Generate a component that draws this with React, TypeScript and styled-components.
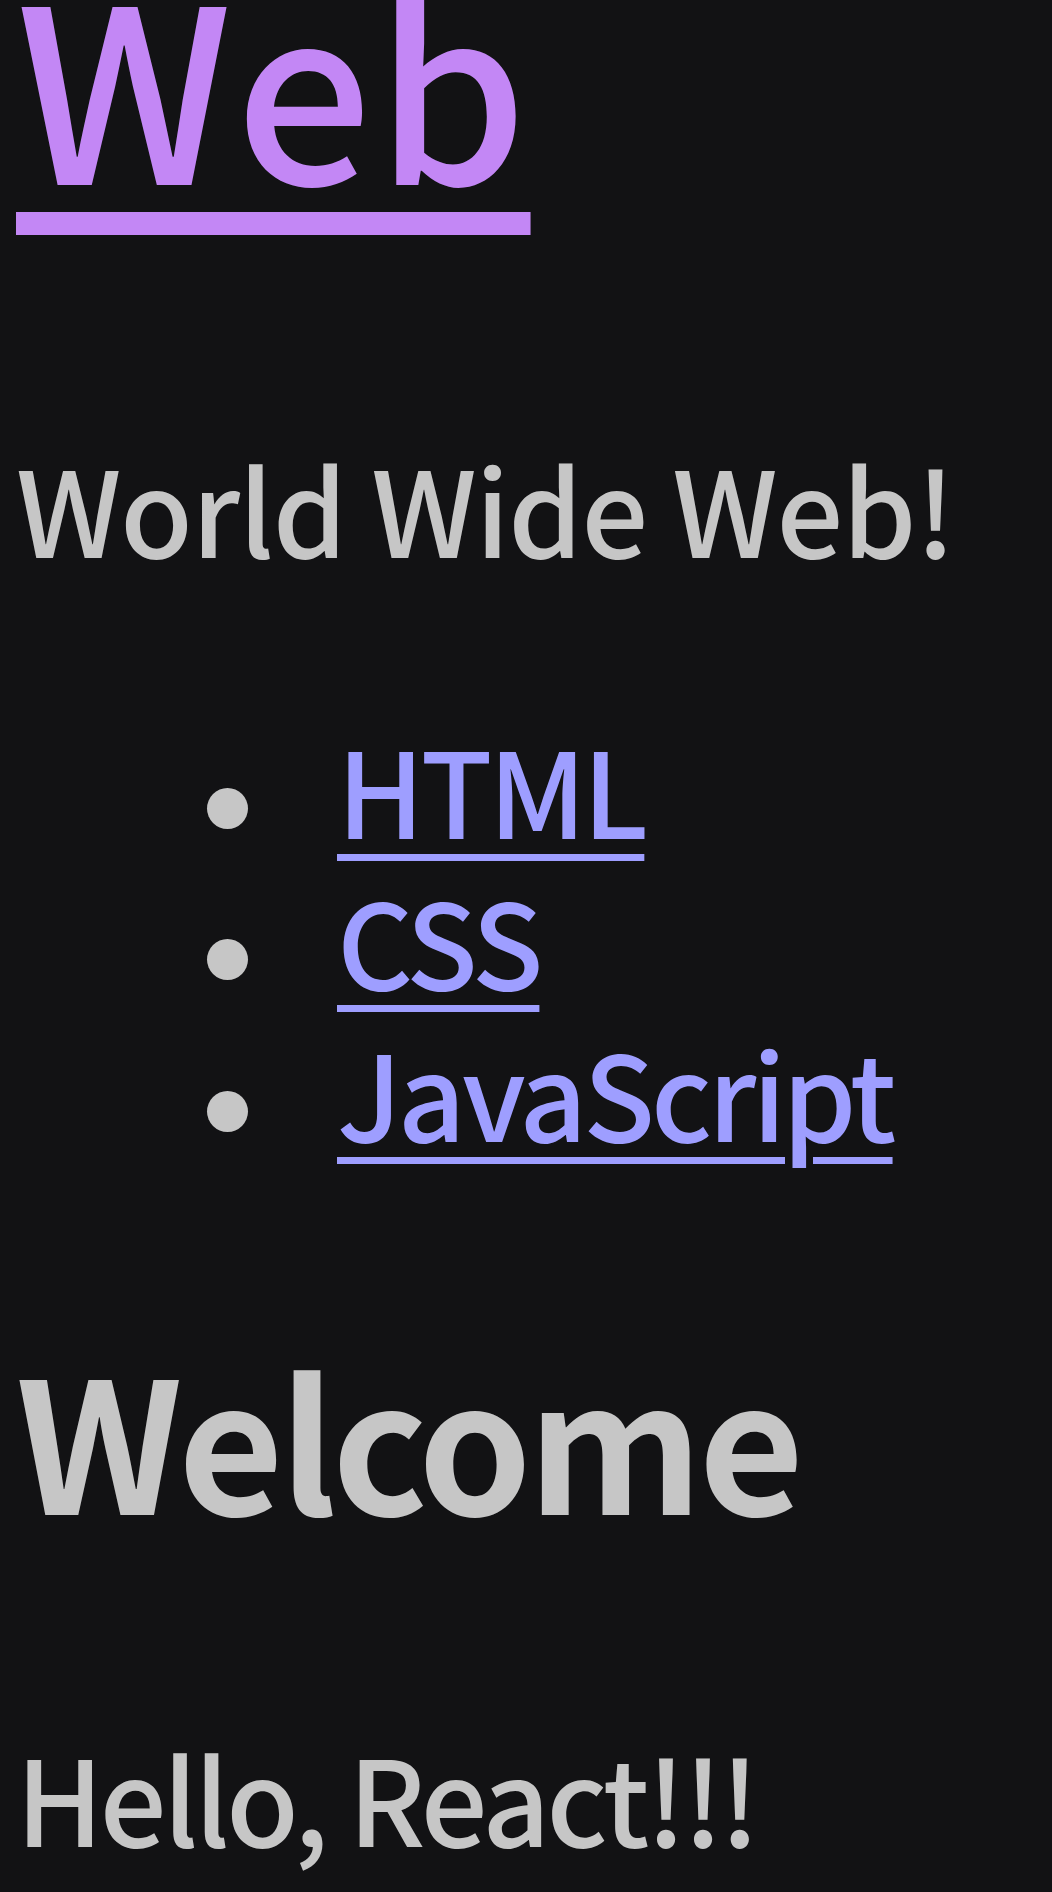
import React from "react";
import styled, { createGlobalStyle } from "styled-components";

const GlobalStyle = createGlobalStyle`
  html, body {
    margin: 0;
    padding: 0;
    background: #121214;
  }
  body {
    color: #c6c6c6;
    font-family: "Noto Sans CJK KR", "Noto Sans", sans-serif;
  }
`;

const topics = [
  { id: 1, title: "HTML" },
  { id: 2, title: "CSS" },
  { id: 3, title: "JavaScript" },
];

function Header() {
  return (
    <Title>
      <TitleLink href="/">Web</TitleLink>
    </Title>
  );
}

function Nav() {
  return (
    <TopicList>
      {topics.map((t) => (
        <TopicItem key={t.id}>
          <Bullet />
          <TopicLink href={"/read/" + t.id}>{t.title}</TopicLink>
        </TopicItem>
      ))}
    </TopicList>
  );
}

function Article({ title, body }: { title: string; body: string }) {
  return (
    <article>
      <ArticleTitle>{title}</ArticleTitle>
      <Body>{body}</Body>
    </article>
  );
}

export default function App() {
  return (
    <>
      <GlobalStyle />
      <Page>
        <Header />
        <Intro>World Wide Web!</Intro>
        <Nav />
        <Article title="Welcome" body="Hello, React!!!" />
      </Page>
    </>
  );
}

// css styles
const Page = styled.div`
  padding: 0 16px;
  min-height: 1892px;
  box-sizing: border-box;
  font-weight: 500;
`;

const Title = styled.h1`
  margin: 0 0 272px;
  font-size: 242px;
  font-weight: 500;
  line-height: 159px;
  letter-spacing: 3px;
`;

const TitleLink = styled.a`
  color: #c387f5;
  text-decoration: underline;
  text-decoration-thickness: 23px;
  text-underline-offset: 27px;
`;

const Intro = styled.p`
  margin: 0;
  font-size: 118px;
  line-height: 151.5px;
  letter-spacing: -1.2px;
`;

const TopicList = styled.ul`
  list-style: none;
  margin: 129px 0 0;
  padding: 0 0 0 191px;
  font-size: 118px;
  line-height: 151.5px;
`;

const TopicItem = styled.li`
  white-space: nowrap;
`;

const Bullet = styled.span`
  display: inline-block;
  width: 41px;
  height: 41px;
  margin: 0 89px 10px 0;
  border-radius: 50%;
  background: #c6c6c6;
`;

const TopicLink = styled.a`
  color: #9e9eff;
  letter-spacing: -4px;
  text-decoration: underline;
  text-decoration-thickness: 7px;
  text-underline-offset: 15px;
`;

const ArticleTitle = styled.h2`
  margin: 153px 0 0;
  font-size: 182px;
  font-weight: 700;
  line-height: 234px;
  letter-spacing: -4.5px;
`;

const Body = styled.p`
  margin: 167px 0 0;
  font-size: 118px;
  line-height: 151.5px;
  letter-spacing: -3.6px;
`;
